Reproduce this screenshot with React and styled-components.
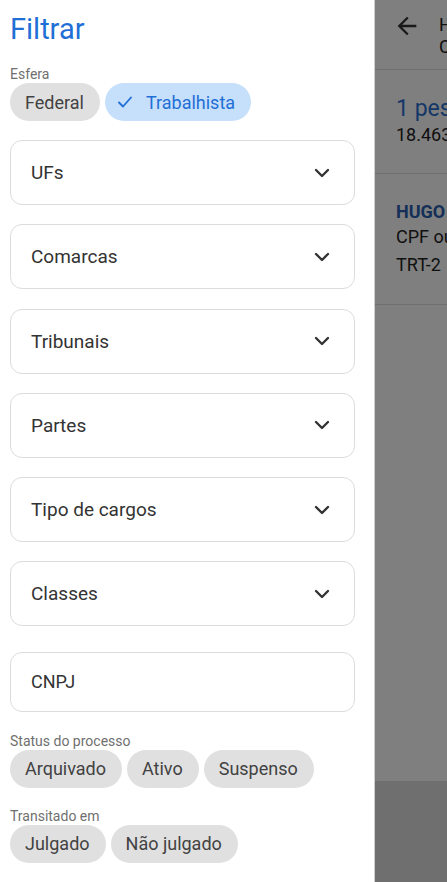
import styled, { createGlobalStyle } from 'styled-components'

const GlobalStyle = createGlobalStyle`
    html, body {
        margin: 0;
        padding: 0;
        background: #ffffff;
        font-family: Roboto, "Noto Sans", Arial, sans-serif;
    }
    * { box-sizing: border-box; }
`

const Screen = styled.div`
    display: flex;
    width: 447px;
    height: 882px;
    overflow: hidden;
`

const Drawer = styled.aside`
    flex: none;
    width: 375px;
    height: 100%;
    background: #ffffff;
    border-right: 1px solid #cfcfcf;
    padding: 12px 19px 0 10px;
    display: flex;
    flex-direction: column;
`

const Title = styled.h1`
    margin: 0;
    font-size: 29px;
    line-height: 34px;
    font-weight: 400;
    color: #1f6fd6;
`

const Label = styled.div`
    font-size: 14px;
    line-height: 16px;
    color: #6f6f6f;
    margin-top: ${({ $top }) => $top}px;
`

const ChipRow = styled.div`
    display: flex;
    gap: 5px;
    margin-top: 1px;
`

const Chip = styled.div`
    height: 38px;
    border-radius: 19px;
    display: flex;
    align-items: center;
    gap: 14px;
    padding: 0 16px 0 ${({ $selected }) => ($selected ? 13 : 15)}px;
    font-size: 18px;
    color: ${({ $selected }) => ($selected ? '#1f6fd6' : '#424242')};
    background: ${({ $selected }) => ($selected ? '#c6dffb' : '#e0e0e0')};
    white-space: nowrap;
`

const Fields = styled.div`
    display: flex;
    flex-direction: column;
    gap: 19.3px;
    margin-top: 19px;
`

const Field = styled.div`
    height: ${({ $h }) => $h}px;
    border: 1px solid #dcdcdc;
    border-radius: 12px;
    display: flex;
    align-items: center;
    justify-content: space-between;
    padding: 0 24px 0 20px;
    font-size: ${({ $fs }) => $fs || 19}px;
    color: #333333;
    margin-top: ${({ $top }) => $top || 0}px;
`

const Page = styled.main`
    flex: none;
    width: 447px;
    height: 100%;
    position: relative;
    display: flex;
    flex-direction: column;
    background: #ffffff;
    color: #222222;
`

const Scrim = styled.div`
    position: absolute;
    inset: 0;
    background: rgba(0, 0, 0, 0.5);
`

const Header = styled.header`
    height: 70px;
    border-bottom: 1px solid #e0e0e0;
    display: flex;
    align-items: flex-start;
    gap: 18px;
    padding: 12px 0 0 18px;
    white-space: nowrap;
`

const HeaderText = styled.div`
    font-size: 18px;
    line-height: 22px;
    color: #222222;
    margin-top: 2px;
`

const Section = styled.section`
    border-bottom: 1px solid #e0e0e0;
    padding: ${({ $pad }) => $pad};
    white-space: nowrap;
`

const Count = styled.div`
    font-size: 23px;
    line-height: 28px;
    color: #2a6fd0;
`

const Line = styled.div`
    font-size: 18px;
    line-height: ${({ $lh }) => $lh || 26}px;
    color: ${({ $blue }) => ($blue ? '#2a5fb0' : '#222222')};
    font-weight: ${({ $bold }) => ($bold ? 700 : 400)};
`

const Spacer = styled.div`
    flex: 1;
`

const Footer = styled.footer`
    height: 101px;
    background: #dedede;
`

const Chevron = () => (
    <svg width="16" height="10" viewBox="0 0 16 10" fill="none">
        <path d="M2 2l6 6 6-6" stroke="#333" strokeWidth="2.4" strokeLinecap="round" strokeLinejoin="round" />
    </svg>
)

const Check = () => (
    <svg width="14" height="12" viewBox="0 0 14 12" fill="none">
        <path d="M1 6.5l4 4L13 1.5" stroke="#1f6fd6" strokeWidth="1.8" strokeLinecap="round" strokeLinejoin="round" />
    </svg>
)

const ArrowBack = () => (
    <svg width="28" height="28" viewBox="0 0 24 24">
        <path d="M20 11H7.83l5.59-5.59L12 4l-8 8 8 8 1.41-1.41L7.83 13H20v-2z" fill="#333" />
    </svg>
)

const selects = ['UFs', 'Comarcas', 'Tribunais', 'Partes', 'Tipo de cargos', 'Classes']

const App = () => (
    <>
        <GlobalStyle />
        <Screen>
            <Drawer>
                <Title>Filtrar</Title>

                <Label $top={20}>Esfera</Label>
                <ChipRow>
                    <Chip>Federal</Chip>
                    <Chip $selected><Check />Trabalhista</Chip>
                </ChipRow>

                <Fields>
                    {selects.map(s => (
                        <Field key={s} $h={65}>
                            {s}
                            <Chevron />
                        </Field>
                    ))}
                    <Field $h={60} $fs={18} $top={6}>CNPJ</Field>
                </Fields>

                <Label $top={21}>Status do processo</Label>
                <ChipRow>
                    <Chip>Arquivado</Chip>
                    <Chip>Ativo</Chip>
                    <Chip>Suspenso</Chip>
                </ChipRow>

                <Label $top={20}>Transitado em</Label>
                <ChipRow>
                    <Chip>Julgado</Chip>
                    <Chip>Não julgado</Chip>
                </ChipRow>
            </Drawer>

            <Page>
                <Header>
                    <ArrowBack />
                    <HeaderText>
                        <div>HUGO DA SILVA</div>
                        <div>CPF 123.456.789-00</div>
                    </HeaderText>
                </Header>
                <Section $pad="25px 21px 26px">
                    <Count>1 pessoa encontrada</Count>
                    <Line $lh={24}>18.463 processos</Line>
                </Section>
                <Section $pad="26px 21px 24px">
                    <Line $blue $bold $lh={24}>HUGO DA SILVA</Line>
                    <Line $lh={26}>CPF ou CNPJ</Line>
                    <Line $lh={30}>TRT-2</Line>
                </Section>
                <Spacer />
                <Footer />
                <Scrim />
            </Page>
        </Screen>
    </>
)

export default App
